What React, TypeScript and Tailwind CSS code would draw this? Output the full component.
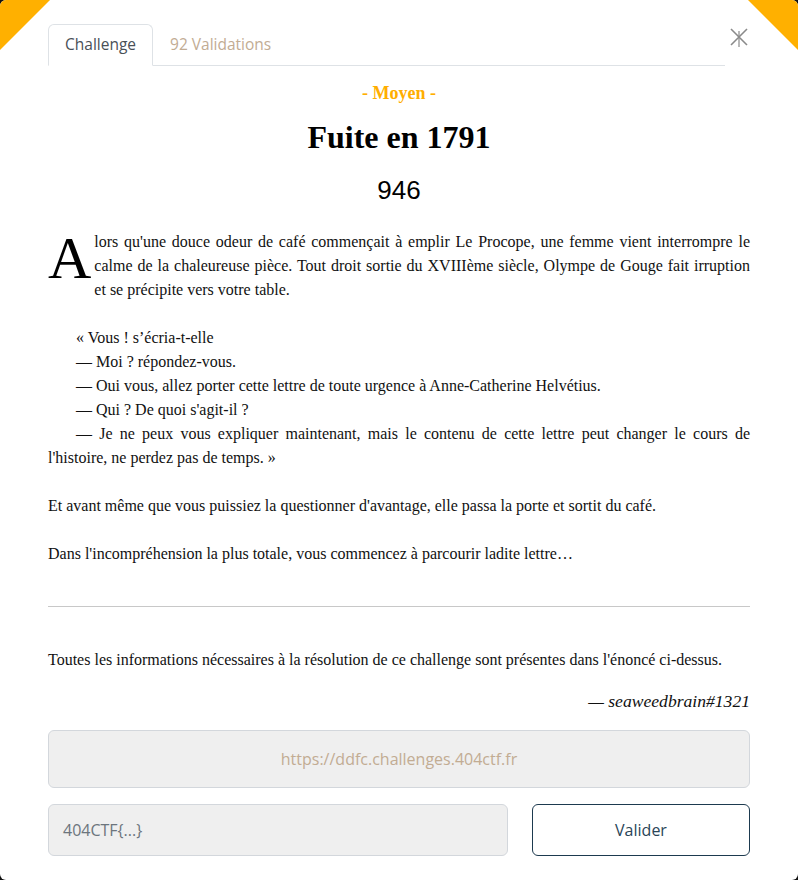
import React from "react";

export default function App() {
  const serif = { fontFamily: '"Liberation Serif", "Times New Roman", serif' };
  return (
    <div className="w-[798px] h-[880px] bg-[#111111]">
      <div className="relative w-[798px] h-[880px] bg-white rounded-[6px] overflow-hidden text-[#212529]">
        {/* corner triangles */}
        <div className="absolute top-0 left-0 w-0 h-0 border-t-[50px] border-t-[#ffb000] border-r-[50px] border-r-transparent" />
        <div className="absolute top-0 right-0 w-0 h-0 border-t-[50px] border-t-[#ffb000] border-l-[50px] border-l-transparent" />

        <div className="px-[48px] pt-[24px]">
          {/* tabs */}
          <div className="flex items-start">
            <div className="flex w-[677px] border-b border-[#dee2e6] font-['Open_Sans',sans-serif] text-[15.5px]">
              <div className="h-[42px] -mb-px px-[16px] flex items-center border border-[#dee2e6] border-b-white rounded-t-[6px] text-[#495057] bg-white">
                Challenge
              </div>
              <div className="h-[41px] px-[17px] flex items-center text-[#c2ac93]">92 Validations</div>
            </div>
            <div className="flex-1 flex justify-end">
              <svg width="24" height="24" viewBox="0 0 24 24" className="mt-[1px] -mr-[1px]">
                <path d="M4 4 L20 20 M20 4 L4 20" stroke="#8a8a8a" strokeWidth="1.6" fill="none" />
                <path d="M12 6 L12 22" stroke="#8a8a8a" strokeWidth="1.2" fill="none" />
              </svg>
            </div>
          </div>

          <div style={serif}>
            <div className="text-center font-bold text-[18px] text-[#ffae00] mt-[15px] leading-[24px]">- Moyen -</div>
            <h1 className="text-center font-bold text-[32px] leading-[40px] mt-[12px] text-black">Fuite en 1791</h1>
            <div className="text-center text-[26px] leading-[30px] mt-[18px] text-black font-['Liberation_Sans',Arial,sans-serif]">946</div>

            <div className="mt-[25px] text-[16px] leading-[24px] text-justify text-[#111]">
              <p className="mb-[24px]">
                <span className="float-left text-[60px] leading-[48px] mt-[4px] mr-[3px] text-black">A</span>
                lors qu'une douce odeur de café commençait à emplir Le Procope, une femme vient interrompre le calme de la chaleureuse pièce. Tout droit sortie du XVIIIème siècle, Olympe de Gouge fait irruption et se précipite vers votre table.
              </p>
              <p className="indent-[28px]">« Vous ! s’écria-t-elle</p>
              <p className="indent-[28px]">— Moi ? répondez-vous.</p>
              <p className="indent-[28px]">— Oui vous, allez porter cette lettre de toute urgence à Anne-Catherine Helvétius.</p>
              <p className="indent-[28px]">— Qui ? De quoi s'agit-il ?</p>
              <p className="indent-[28px] mb-[24px]">— Je ne peux vous expliquer maintenant, mais le contenu de cette lettre peut changer le cours de l'histoire, ne perdez pas de temps. »</p>
              <p className="mb-[24px]">Et avant même que vous puissiez la questionner d'avantage, elle passa la porte et sortit du café.</p>
              <p>Dans l'incompréhension la plus totale, vous commencez à parcourir ladite lettre…</p>
            </div>

            <div className="mt-[40px] h-px bg-[#c8c8c8]" />

            <p className="mt-[43px] text-[16px] leading-[20px] text-[#111]">
              Toutes les informations nécessaires à la résolution de ce challenge sont présentes dans l'énoncé ci-dessus.
            </p>
            <p className="mt-[21px] text-right italic text-[17.6px] leading-[20px] text-[#111]">— seaweedbrain#1321</p>
          </div>

          <div className="font-['Open_Sans',sans-serif]">
            <div className="mt-[19px] h-[58px] rounded-[6px] border border-[#d3d7dc] bg-[#efefef] flex items-center justify-center text-[16px] text-[#c2ac93]">
              https://ddfc.challenges.404ctf.fr
            </div>
            <div className="mt-[16px] flex gap-[24px]">
              <div className="w-[460px] h-[52px] rounded-[6px] border border-[#d3d7dc] bg-[#efefef] flex items-center px-[14px] text-[16px] text-[#6c757d]">
                404CTF{"{...}"}
              </div>
              <div className="flex-1 h-[52px] rounded-[6px] border border-[#1d3a4f] flex items-center justify-center text-[16px] text-[#2a4558]">
                Valider
              </div>
            </div>
          </div>
        </div>
      </div>
    </div>
  );
}
